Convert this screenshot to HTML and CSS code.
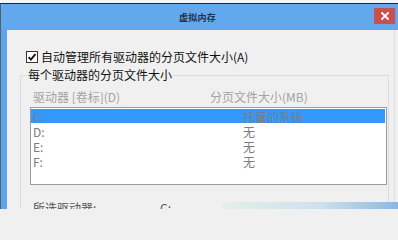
FILE: index.html
```html
<!DOCTYPE html>
<html lang="zh-CN">
<head>
<meta charset="utf-8">
<title>虚拟内存</title>
<link rel="stylesheet" href="styles.css">
</head>
<body>
<div class="screen">
  <div class="strip"></div>
  <div class="window">
    <div class="titlebar">
      <span class="title">虚拟内存</span>
      <span class="close"><svg width="8" height="8" viewBox="0 0 8 8"><path d="M1 1 L7 7 M7 1 L1 7" stroke="#fff" stroke-width="1.8" stroke-linecap="square"/></svg></span>
    </div>
    <div class="frame">
      <div class="side"></div>
      <div class="content">
        <div class="auto">
          <svg class="check" width="12" height="12" viewBox="0 0 12 12"><rect x="0.5" y="0.5" width="11" height="11" fill="#fff" stroke="#333"/><path d="M2.6 6.2 L4.9 8.6 L9.4 3.2" fill="none" stroke="#111" stroke-width="1.9"/></svg>
          <span class="autotext">自动管理所有驱动器的分页文件大小(A)</span>
        </div>
        <fieldset class="group">
          <legend>每个驱动器的分页文件大小</legend>
          <div class="cols"><span class="c1">驱动器 [卷标](D)</span><span class="c2">分页文件大小(MB)</span></div>
          <div class="list">
            <div class="row sel"><span class="drv">C:</span><span class="val">托管的系统</span></div>
            <div class="row"><span class="drv">D:</span><span class="val">无</span></div>
            <div class="row"><span class="drv">E:</span><span class="val">无</span></div>
            <div class="row"><span class="drv">F:</span><span class="val">无</span></div>
          </div>
          <div class="selrow"><span class="s1">所选驱动器:</span><span class="s2">C:</span></div>
        </fieldset>
      </div>
    </div>
  </div>
  <div class="overlay"></div>
</div>
</body>
</html>
```

FILE: styles.css
```css
html, body {
  margin: 0;
  padding: 0;
}
body {
  width: 398px;
  height: 209px;
  overflow: hidden;
  background: #f0f0f0;
  font-family: "Noto Sans CJK SC", "Noto Sans", sans-serif;
  font-size: 12px;
}
.screen {
  position: relative;
  width: 398px;
  height: 209px;
  overflow: hidden;
}
.strip {
  height: 3px;
  background: #f6f6f6;
}
.window {
  border-top: 1px solid #262626;
  border-left: 1px solid #55606e;
}
.titlebar {
  position: relative;
  height: 26px;
  background: #62a8ec;
  display: flex;
  align-items: center;
  justify-content: center;
}
.title {
  font-size: 9px;
  line-height: 12px;
  color: #22304a;
  letter-spacing: 0.2px;
  margin-top: 1px;
  font-weight: bold;
  margin-left: -4px;
}
.close {
  position: absolute;
  top: 4px;
  right: 3px;
  width: 21px;
  height: 16px;
  background: #c9504f;
  display: flex;
  align-items: center;
  justify-content: center;
}
.frame {
  display: flex;
  height: 179px;
}
.side {
  width: 6px;
  background: #5ea4ea;
  border-right: 0;
}
.content {
  flex: 1;
  background: #f0f0f0;
  border-right: 1px solid #e2e2e2;
  margin-right: 3px;
}
.auto {
  display: flex;
  align-items: center;
  height: 12px;
  margin: 21px 0 0 19px;
}
.check {
  display: block;
  flex: none;
}
.autotext {
  margin-left: 3px;
  line-height: 12px;
  color: #111;
}
.group {
  margin: 5px 0 0 13px;
  width: 369px;
  height: 160px;
  padding: 0;
  border: 1px solid #dcdcdc;
  box-sizing: border-box;
}
.group legend {
  margin-left: 6px;
  padding: 0 1px;
  line-height: 14px;
  color: #111;
}
.cols {
  display: flex;
  margin-top: 8px;
  padding-left: 12px;
  line-height: 14px;
  color: #a3a3a3;
}
.c1 {
  width: 177px;
}
.list {
  margin: 3px 0 0 9px;
  width: 357px;
  height: 78px;
  box-sizing: border-box;
  border: 1px solid #9c9c9c;
  background: #fff;
  padding: 1px 1px 0 0;
}
.row {
  display: flex;
  height: 15px;
  line-height: 15px;
  color: #7c7c7c;
}
.row.sel {
  background: #3399ff;
  height: 14px;
  margin-bottom: 1px;
  line-height: 15px;
}
.drv {
  width: 210px;
  padding-left: 2px;
}
.selrow {
  display: flex;
  margin-top: 16px;
  padding-left: 12px;
  line-height: 14px;
  color: #555;
}
.s1 {
  width: 127px;
}
.overlay {
  position: absolute;
  left: 221px;
  top: 202px;
  width: 177px;
  height: 10px;
  background: linear-gradient(to right, #e4efe9 0%, #cfe1ec 55%, #8ab8e4 100%);
}
```
